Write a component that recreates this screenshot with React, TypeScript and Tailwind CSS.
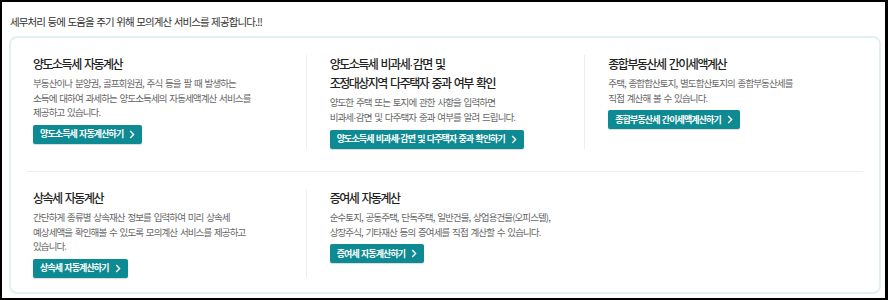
import React from 'react';

type Item = {
    title: string[];
    desc: string[];
    button: string;
};

const rows: Item[][] = [
    [
        {
            title: ['양도소득세 자동계산'],
            desc: [
                '부동산이나 분양권, 골프회원권, 주식 등을 팔 때 발생하는',
                '소득에 대하여 과세하는 양도소득세의 자동세액계산 서비스를',
                '제공하고 있습니다.',
            ],
            button: '양도소득세 자동계산하기',
        },
        {
            title: ['양도소득세 비과세·감면 및', '조정대상지역 다주택자 중과 여부 확인'],
            desc: ['양도한 주택 또는 토지에 관한 사항을 입력하면', '비과세·감면 및 다주택자 중과 여부를 알려 드립니다.'],
            button: '양도소득세 비과세·감면 및 다주택자 중과 확인하기',
        },
        {
            title: ['종합부동산세 간이세액계산'],
            desc: ['주택, 종합합산토지, 별도합산토지의 종합부동산세를', '직접 계산해 볼 수 있습니다.'],
            button: '종합부동산세 간이세액계산하기',
        },
    ],
    [
        {
            title: ['상속세 자동계산'],
            desc: [
                '간단하게 종류별 상속재산 정보를 입력하여 미리 상속세',
                '예상세액을 확인해볼 수 있도록 모의계산 서비스를 제공하고',
                '있습니다.',
            ],
            button: '상속세 자동계산하기',
        },
        {
            title: ['증여세 자동계산'],
            desc: ['순수토지, 공동주택, 단독주택, 일반건물, 상업용건물(오피스텔),', '상장주식, 기타재산 등의 증여세를 직접 계산할 수 있습니다.'],
            button: '증여세 자동계산하기',
        },
    ],
];

// middle dot drawn from a latin font so it stays narrow
const Txt = ({ text }: { text: string }) => {
    const parts = text.split('·');
    return (
        <>
            {parts.map((p, i) => (
                <React.Fragment key={i}>
                    {i > 0 && <span className="font-['Liberation_Sans'] tracking-[-0.5px]">·</span>}
                    {p}
                </React.Fragment>
            ))}
        </>
    );
};

const Chevron = () => (
    <svg width="6" height="9" viewBox="0 0 6 9" fill="none" className="ml-[6px] shrink-0">
        <path d="M1.2 1L4.6 4.5L1.2 8" stroke="white" strokeWidth="1.4" />
    </svg>
);

const Card: React.FC<{ item: Item; first: boolean }> = ({ item, first }) => (
    <div className={first ? 'pl-[6px]' : 'pl-[23px] border-l border-[#eeeef2]'}>
        <h3 className="text-[12px] leading-[17px] font-medium text-[#222] tracking-[-1.5px] [word-spacing:2px]">
            {item.title.map(t => (
                <div key={t}>
                    <Txt text={t} />
                </div>
            ))}
        </h3>
        <div className="mt-[4px] text-[9.5px] leading-[14.5px] text-[#666] tracking-[-0.9px] [word-spacing:1.5px]">
            {item.desc.map(d => (
                <div key={d}>
                    <Txt text={d} />
                </div>
            ))}
        </div>
        <button className="mt-[5px] h-[19px] px-[7px] flex items-center rounded-[2px] bg-[#0e8a93] text-white text-[9px] font-bold tracking-[-0.9px] [word-spacing:1px] shadow-[0_1px_1px_rgba(0,0,0,0.15)]">
            <span>
                <Txt text={item.button} />
            </span>
            <Chevron />
        </button>
    </div>
);

export default function App() {
    return (
        <div
            className="w-[888px] h-[300px] bg-white border-t-2 border-l-2 border-b-2 border-r-[3px] border-black flex flex-col"
            style={{ fontFamily: '"Noto Sans CJK KR", "Noto Sans", sans-serif' }}
        >
            <p className="mt-[13px] ml-[8px] text-[10.5px] leading-[14px] text-[#333] tracking-[-0.9px] [word-spacing:1px]">
                세무처리 등에 도움을 주기 위해 모의계산 서비스를 제공합니다.!!
            </p>
            <div className="mt-[7px] ml-[7px] mr-[4px] h-[258px] rounded-[8px] border-2 border-[#e2f0f3] px-[16px]">
                <div className="grid grid-cols-3 pt-[17px] pb-[22px] border-b border-[#eceef1]">
                    {rows[0].map((item, i) => (
                        <Card key={i} item={item} first={i === 0} />
                    ))}
                </div>
                <div className="grid grid-cols-3 pt-[17px]">
                    {rows[1].map((item, i) => (
                        <Card key={i} item={item} first={i === 0} />
                    ))}
                </div>
            </div>
        </div>
    );
}
